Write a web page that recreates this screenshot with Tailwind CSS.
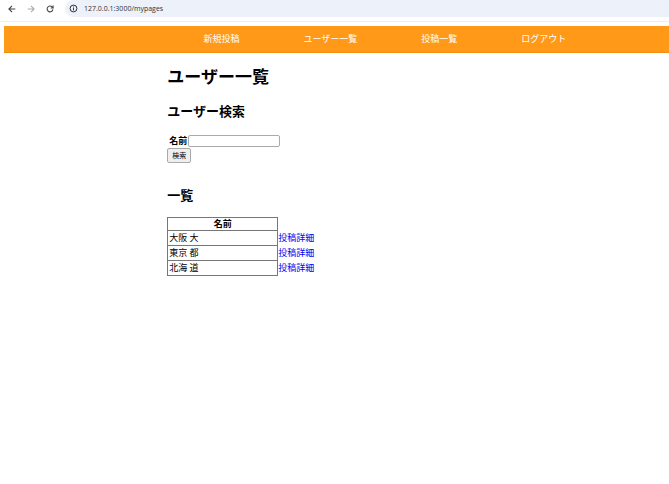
<!DOCTYPE html>
<html lang="ja">
<head>
<meta charset="utf-8">
<meta name="viewport" content="width=device-width, initial-scale=1">
<title>ユーザー一覧</title>
<script src="https://cdn.jsdelivr.net/npm/@tailwindcss/browser@4"></script>
</head>
<body class="bg-white font-['Noto_Sans','Noto_Sans_CJK_JP',sans-serif] text-[9px] leading-[14px] text-black">
<div class="flex h-[22px] items-start border-b border-[#eeeeee]">
  <div class="flex h-[17px] w-[65px] shrink-0 items-center gap-[9px] pl-[7px] text-[#444746]">
    <button type="button" aria-label="戻る"><svg class="size-[10px]" viewBox="0 0 10 10" fill="none" stroke="currentColor" stroke-width="1.1"><path d="M8.3 5H2M5 1.9 1.9 5 5 8.1"/></svg></button>
    <button type="button" aria-label="進む" class="text-[#a9abad]"><svg class="size-[10px]" viewBox="0 0 10 10" fill="none" stroke="currentColor" stroke-width="1.1"><path d="M1.7 5H8M5 1.9 8.1 5 5 8.1"/></svg></button>
    <button type="button" aria-label="再読み込み"><svg class="size-[10px]" viewBox="0 0 10 10" fill="none" stroke="currentColor" stroke-width="1.1"><path d="M7.9 5.4A2.9 2.9 0 1 1 7.2 3L8 3.8M8.1 1.6V4H5.7"/></svg></button>
  </div>
  <div class="flex h-[17px] grow items-center gap-[6px] rounded-l-full bg-[#edf1fa] pl-[4px]">
    <svg class="size-[9px] shrink-0" viewBox="0 0 9 9" fill="none" stroke="#303234" stroke-width="1"><circle cx="4.5" cy="4.5" r="3.4"/><path d="M4.5 4.1v2.3M4.5 2.5v1"/></svg>
    <input type="text" aria-label="アドレス" value="127.0.0.1:3000/mypages" class="h-[14px] min-w-0 grow bg-transparent font-['Open_Sans',sans-serif] text-[7px] text-[#303234] outline-none">
  </div>
</div>
<div class="pt-1 pl-1">
  <header class="border-b border-[#f58c0a] bg-[#ff9917] pt-[6px] pb-[6px]">
    <nav class="pl-[30%]">
      <ul class="flex gap-16 whitespace-nowrap text-white">
        <li><a href="#">新規投稿</a></li>
        <li><a href="#">ユーザー一覧</a></li>
        <li><a href="#">投稿一覧</a></li>
        <li><a href="#">ログアウト</a></li>
      </ul>
    </nav>
  </header>
</div>
<main class="ml-[25%] pt-3">
  <h1 class="text-[17px] leading-6 font-bold">ユーザー一覧</h1>
  <h2 class="mt-3 text-[13px] leading-5 font-bold">ユーザー検索</h2>
  <form class="mt-[13px]">
    <div class="flex items-center gap-px pl-[2px]">
      <label for="name" class="font-bold">名前</label>
      <input id="name" type="text" class="h-3 w-[92px] rounded-[2px] border border-[#aaaaaa] px-[2px] text-[8px]">
    </div>
    <button type="submit" class="block h-[15px] w-[24px] rounded-[2px] border border-[#aaaaaa] bg-[#efefef] text-[7px] leading-[13px] whitespace-nowrap">検索</button>
  </form>
  <h2 class="mt-[22px] text-[13px] leading-5 font-bold">一覧</h2>
  <table class="mt-3 border-collapse leading-[14px]">
    <thead>
      <tr><th class="w-[110px] border border-[#777777] p-0 leading-[12px] font-bold">名前</th></tr>
    </thead>
    <tbody>
      <tr><td class="border border-[#777777] px-px">大阪 大</td><td class="text-[#0000ee]"><a href="#">投稿詳細</a></td></tr>
      <tr><td class="border border-[#777777] px-px">東京 都</td><td class="text-[#0000ee]"><a href="#">投稿詳細</a></td></tr>
      <tr><td class="border border-[#777777] px-px">北海 道</td><td class="text-[#0000ee]"><a href="#">投稿詳細</a></td></tr>
    </tbody>
  </table>
</main>
</body>
</html>
